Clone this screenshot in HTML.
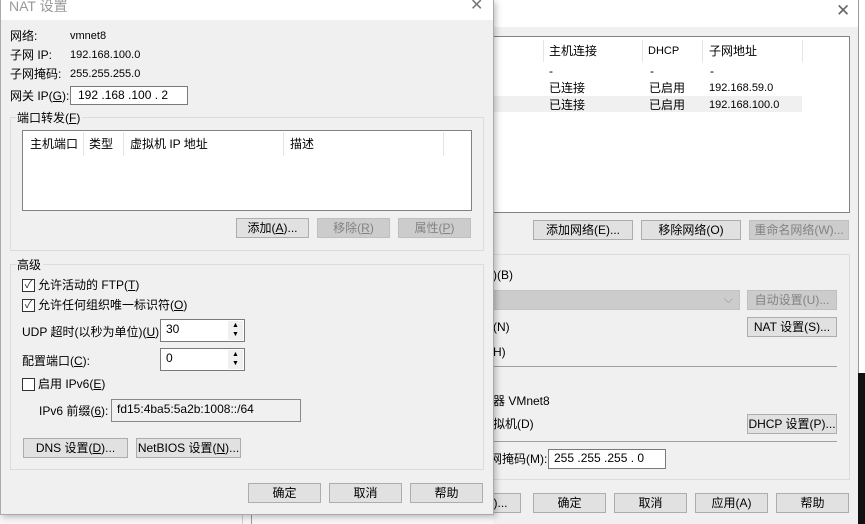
<!DOCTYPE html><html><head><meta charset="utf-8"><style>
*{box-sizing:border-box;margin:0;padding:0}
body{width:865px;height:524px;position:relative;overflow:hidden;background:#f0f0f0;font-family:"Liberation Sans","Noto Sans CJK SC",sans-serif;font-size:12px;color:#000}
.a{position:absolute;white-space:nowrap;line-height:16px}
.btn{position:absolute;background:#e1e1e1;border:1px solid #adadad;text-align:center;line-height:18px;height:20px}
.dis{color:#838383;background:#cccccc;border-color:#bfbfbf}
.grp{position:absolute;border:1px solid #dcdcdc}
.inp{position:absolute;background:#fff;border:1px solid #7a7a7a;line-height:16px;padding-left:5px}
.cb{position:absolute;width:13px;height:13px;border:1px solid #333;background:#fff;font-size:11px;line-height:11px;text-align:center;color:#333}
</style></head><body>
<div class="a" style="left:493px;top:0;width:365px;height:27px;background:#fff"></div>
<div class="a" style="left:836px;top:3px;font-size:17px;color:#666">✕</div>
<div class="a" style="left:858px;top:0;width:7px;height:373px;background:#fff;border-left:1px solid #999"></div>
<div class="a" style="left:858px;top:373px;width:7px;height:151px;background:#111"></div>
<div class="a" style="left:493px;top:36px;width:357px;height:177px;background:#fff;border:1px solid #828282;border-left:none"></div>
<div class="a" style="left:543px;top:40px;width:1px;height:22px;background:#e5e5e5"></div>
<div class="a" style="left:642px;top:40px;width:1px;height:22px;background:#e5e5e5"></div>
<div class="a" style="left:702px;top:40px;width:1px;height:22px;background:#e5e5e5"></div>
<div class="a" style="left:802px;top:40px;width:1px;height:22px;background:#e5e5e5"></div>
<div class="a" style="left:549px;top:43px">主机连接</div>
<div class="a" style="left:648px;top:43px;font-size:11px">DHCP</div>
<div class="a" style="left:709px;top:43px">子网地址</div>
<div class="a" style="left:549px;top:63px">-</div><div class="a" style="left:650px;top:63px">-</div><div class="a" style="left:710px;top:63px">-</div>
<div class="a" style="left:493px;top:96px;width:309px;height:16px;background:#f0f0f0"></div>
<div class="a" style="left:549px;top:80px">已连接</div><div class="a" style="left:649px;top:80px">已启用</div><div class="a" style="left:709px;top:80px;font-size:11px">192.168.59.0</div>
<div class="a" style="left:549px;top:97px">已连接</div><div class="a" style="left:649px;top:97px">已启用</div><div class="a" style="left:709px;top:97px;font-size:11px">192.168.100.0</div>
<div class="btn" style="left:533px;top:220px;width:100px">添加网络(E)...</div>
<div class="btn" style="left:641px;top:220px;width:100px">移除网络(O)</div>
<div class="btn dis" style="left:749px;top:220px;width:100px">重命名网络(W)...</div>
<div class="grp" style="left:480px;top:254px;width:370px;height:226px"></div>
<div class="a" style="left:493px;top:267px">)(B)</div>
<div class="a" style="left:493px;top:290px;width:247px;height:20px;background:#ccc;border:1px solid #c4c4c4;color:#999;text-align:right;padding-right:6px">⌵</div>
<div class="btn dis" style="left:747px;top:290px;width:90px">自动设置(U)...</div>
<div class="btn" style="left:747px;top:317px;width:90px">NAT 设置(S)...</div>
<div class="a" style="left:493px;top:319px">(N)</div>
<div class="a" style="left:493px;top:344px">H)</div>
<div class="a" style="left:493px;top:366px;width:344px;height:1px;background:#a0a0a0"></div>
<div class="a" style="left:493px;top:393px">器 VMnet8</div>
<div class="a" style="left:493px;top:416px">拟机(D)</div>
<div class="btn" style="left:747px;top:414px;width:90px">DHCP 设置(P)...</div>
<div class="a" style="left:493px;top:441px;width:344px;height:1px;background:#a0a0a0"></div>
<div class="a" style="left:490px;top:451px">网掩码(M):</div>
<div class="inp" style="left:548px;top:449px;width:118px;height:20px">255 .255 .255 .  0</div>
<div class="btn" style="left:480px;top:493px;width:41px">)...</div>
<div class="btn" style="left:533px;top:493px;width:73px">确定</div>
<div class="btn" style="left:614px;top:493px;width:73px">取消</div>
<div class="btn" style="left:695px;top:493px;width:73px">应用(A)</div>
<div class="btn" style="left:776px;top:493px;width:73px">帮助</div>
<div class="a" style="left:0;top:514px;width:493px;height:10px;background:#f7f7f7"></div>
<div class="a" style="left:242px;top:514px;width:1px;height:10px;background:#ccc"></div>
<div class="a" style="left:251px;top:514px;width:1px;height:10px;background:#999"></div>
<div class="a" style="left:0;top:0;width:494px;height:515px;background:#f0f0f0;border:1px solid #aaa;box-shadow:2px 2px 6px rgba(0,0,0,.25)"></div>
<div class="a" style="left:1px;top:0;width:492px;height:20px;background:#fff"></div>
<div class="a" style="left:9px;top:-2px;font-size:14px;color:#999">NAT 设置</div>
<div class="a" style="left:470px;top:-2px;font-size:16px;color:#777">✕</div>
<div class="a" style="left:10px;top:28px">网络:</div><div class="a" style="left:70px;top:28px;font-size:11px">vmnet8</div>
<div class="a" style="left:10px;top:47px">子网 IP:</div><div class="a" style="left:70px;top:47px;font-size:11px">192.168.100.0</div>
<div class="a" style="left:10px;top:66px">子网掩码:</div><div class="a" style="left:70px;top:66px;font-size:11px">255.255.255.0</div>
<div class="a" style="left:10px;top:88px">网关 IP(<u>G</u>):</div>
<div class="inp" style="left:70px;top:86px;width:118px;height:19px;padding-left:7px">192 .168 .100 .  2</div>
<div class="grp" style="left:10px;top:117px;width:474px;height:134px"></div>
<div class="a" style="left:17px;top:110px;background:#f0f0f0;padding-right:2px">端口转发(<u>F</u>)</div>
<div class="a" style="left:22px;top:130px;width:450px;height:81px;background:#fff;border:1px solid #828282"></div>
<div class="a" style="left:83px;top:132px;width:1px;height:24px;background:#e5e5e5"></div>
<div class="a" style="left:123px;top:132px;width:1px;height:24px;background:#e5e5e5"></div>
<div class="a" style="left:283px;top:132px;width:1px;height:24px;background:#e5e5e5"></div>
<div class="a" style="left:443px;top:132px;width:1px;height:24px;background:#e5e5e5"></div>
<div class="a" style="left:30px;top:136px">主机端口</div><div class="a" style="left:89px;top:136px">类型</div><div class="a" style="left:130px;top:136px">虚拟机 IP 地址</div><div class="a" style="left:290px;top:136px">描述</div>
<div class="btn" style="left:236px;top:218px;width:73px">添加(<u>A</u>)...</div>
<div class="btn dis" style="left:317px;top:218px;width:73px">移除(<u>R</u>)</div>
<div class="btn dis" style="left:398px;top:218px;width:73px">属性(<u>P</u>)</div>
<div class="grp" style="left:10px;top:264px;width:474px;height:206px"></div>
<div class="a" style="left:17px;top:257px;background:#f0f0f0;padding-right:2px">高级</div>
<div class="cb" style="left:22px;top:279px">✓</div><div class="a" style="left:38px;top:277px">允许活动的 FTP(<u>T</u>)</div>
<div class="cb" style="left:22px;top:299px">✓</div><div class="a" style="left:38px;top:297px">允许任何组织唯一标识符(<u>O</u>)</div>
<div class="a" style="left:22px;top:324px">UDP 超时(以秒为单位)(<u>U</u>):</div>
<div class="inp" style="left:160px;top:319px;width:85px;height:23px;line-height:18px">30</div>
<div class="a" style="left:228px;top:321px;width:15px;height:19px;background:#f0f0f0;font-size:7px;line-height:9px;text-align:center">▲<br>▼</div>
<div class="a" style="left:22px;top:353px">配置端口(<u>C</u>):</div>
<div class="inp" style="left:160px;top:348px;width:85px;height:23px;line-height:18px">0</div>
<div class="a" style="left:228px;top:350px;width:15px;height:19px;background:#f0f0f0;font-size:7px;line-height:9px;text-align:center">▲<br>▼</div>
<div class="cb" style="left:22px;top:378px"></div><div class="a" style="left:38px;top:376px">启用 IPv6(<u>E</u>)</div>
<div class="a" style="left:39px;top:403px">IPv6 前缀(<u>6</u>):</div>
<div class="inp" style="left:111px;top:399px;width:190px;height:23px;background:#f0f0f0;border-color:#888;line-height:18px">fd15:4ba5:5a2b:1008::/64</div>
<div class="btn" style="left:23px;top:438px;width:105px">DNS 设置(<u>D</u>)...</div>
<div class="btn" style="left:136px;top:438px;width:105px">NetBIOS 设置(<u>N</u>)...</div>
<div class="btn" style="left:248px;top:483px;width:73px">确定</div>
<div class="btn" style="left:329px;top:483px;width:73px">取消</div>
<div class="btn" style="left:410px;top:483px;width:73px">帮助</div>
</body></html>
